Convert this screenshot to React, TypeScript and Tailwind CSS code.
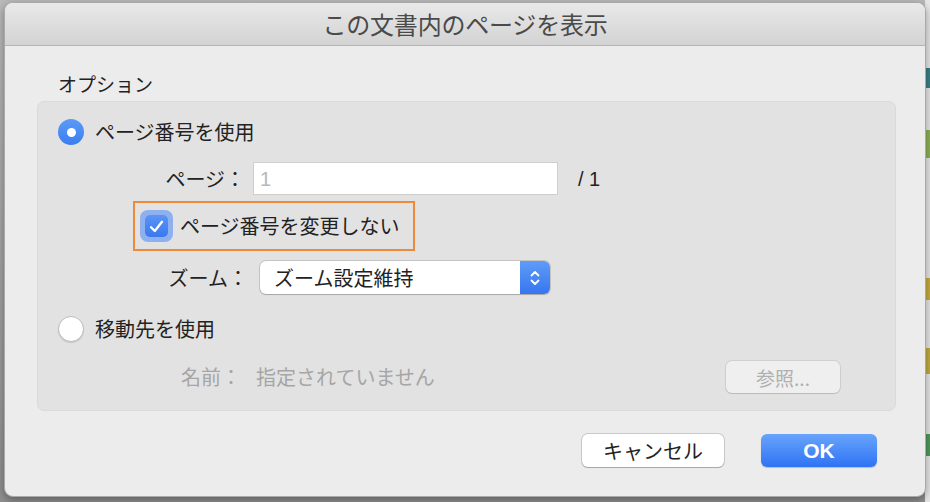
import React from "react";

// macOS style "show page" dialog
const jp = { fontFamily: '"Noto Sans CJK JP", "Noto Sans", sans-serif' };

function Radio({ on }: { on: boolean }) {
	if (on) {
		return (
			<div className="w-[26px] h-[26px] rounded-full bg-gradient-to-b from-[#5b9af7] to-[#3a7ff0] flex items-center justify-center shrink-0">
				<div className="w-[9px] h-[9px] rounded-full bg-white" />
			</div>
		);
	}
	return <div className="w-[26px] h-[26px] rounded-full bg-white border border-[#bdbdbd] shadow-[0_1px_1px_rgba(0,0,0,0.12)] shrink-0" />;
}

export default function App() {
	return (
		<div className="w-[930px] h-[502px] bg-gradient-to-b from-[#b9b9b9] to-[#8f8f8f] overflow-hidden relative" style={jp}>
			{/* bits of the window behind, peeking out on the right */}
			<div className="absolute right-0 top-0 w-[5px] h-full bg-[#e6e6e6]">
				<div className="mt-[68px] h-[20px] bg-[#3a7f86]" />
				<div className="mt-[42px] h-[28px] bg-[#8db055]" />
				<div className="mt-[120px] h-[22px] bg-[#c7aa3e]" />
				<div className="mt-[48px] h-[26px] bg-[#c1ab3f]" />
				<div className="mt-[60px] h-[22px] bg-[#4f9a5a]" />
			</div>

			<div className="ml-[4px] mt-[2px] w-[922px] h-[495px] bg-[#ececec] rounded-[9px] border border-[#a9a9a9] shadow-[0_3px_8px_rgba(0,0,0,0.35)] flex flex-col overflow-hidden relative">
				{/* title bar */}
				<div className="h-[43px] shrink-0 bg-gradient-to-b from-[#e9e9e9] to-[#d3d3d3] border-b border-[#b4b4b4] flex items-center justify-center">
					<span className="text-[24px] text-[#4a4a4a] leading-none tracking-[-0.2px]">この文書内のページを表示</span>
				</div>

				<div className="flex flex-col pl-[32px] pr-[29px]">
					<div className="mt-[26px] ml-[21px] text-[19px] leading-[24px] text-[#222]">オプション</div>

					{/* group box */}
					<div className="mt-[5px] h-[310px] bg-[#e2e2e2] border border-[#dadada] rounded-[7px] flex flex-col text-[20px] text-[#222]">
						<div className="mt-[17px] ml-[20px] flex items-center gap-[11px] h-[26px]">
							<Radio on />
							<span className="leading-none">ページ番号を使用</span>
						</div>

						<div className="mt-[17px] flex items-center h-[33px]">
							<div className="w-[207px] text-right leading-none text-[#222]">ページ：</div>
							<div className="ml-[8px] w-[305px] h-[33px] bg-white border border-[#cfcfcf] flex items-center pl-[6px] text-[#b8b8b8] leading-none" style={{ fontFamily: '"Liberation Sans", sans-serif' }}>
								1
							</div>
							<div className="ml-[20px] leading-none" style={{ fontFamily: '"Liberation Sans", sans-serif' }}>/ 1</div>
						</div>

						<div className="mt-[6px] ml-[95px] w-[282px] h-[50px] border-2 border-[#ef8a3a] flex items-center pl-[5px]">
							<div className="w-[33px] h-[32px] rounded-[8px] bg-[#8fb0ee] flex items-center justify-center shrink-0">
								<div className="w-[23px] h-[22px] rounded-[5px] bg-gradient-to-b from-[#5b95f6] to-[#3a78ee] flex items-center justify-center">
									<svg width="15" height="13" viewBox="0 0 15 13" fill="none">
										<path d="M2 7.2 L5.8 11 L13 1.8" stroke="white" strokeWidth="2.3" strokeLinecap="round" strokeLinejoin="round" />
									</svg>
								</div>
							</div>
							<span className="ml-[7px] leading-none">ページ番号を変更しない</span>
						</div>

						<div className="mt-[10px] flex items-center h-[33px]">
							<div className="w-[210px] text-right leading-none">ズーム：</div>
							<div className="ml-[12px] w-[290px] h-[33px] bg-white rounded-[6px] shadow-[0_0_0_1px_rgba(0,0,0,0.13),0_1px_1px_rgba(0,0,0,0.15)] flex items-stretch overflow-hidden">
								<div className="flex-1 flex items-center pl-[14px] leading-none">ズーム設定維持</div>
								<div className="w-[30px] bg-gradient-to-b from-[#5f9bf7] to-[#3676ef] flex items-center justify-center">
									<svg width="12" height="20" viewBox="0 0 12 20" fill="none">
										<path d="M2.5 7.5 L6 4 L9.5 7.5" stroke="white" strokeWidth="1.8" strokeLinecap="round" strokeLinejoin="round" />
										<path d="M2.5 12.5 L6 16 L9.5 12.5" stroke="white" strokeWidth="1.8" strokeLinecap="round" strokeLinejoin="round" />
									</svg>
								</div>
							</div>
						</div>

						<div className="mt-[22px] ml-[20px] flex items-center gap-[11px] h-[26px]">
							<Radio on={false} />
							<span className="leading-none">移動先を使用</span>
						</div>

						<div className="mt-[19px] flex items-center h-[32px] text-[#a6a6a6]">
							<div className="ml-[143px] leading-none">名前：</div>
							<div className="ml-[15px] leading-none">指定されていません</div>
							<div className="ml-auto mr-[55px] w-[114px] h-[32px] rounded-[6px] bg-[#efefef] shadow-[0_0_0_1px_rgba(0,0,0,0.08),0_1px_1px_rgba(0,0,0,0.1)] flex items-center justify-center text-[19px] text-[#b0b0b0] leading-none">
								参照...
							</div>
						</div>
					</div>

					{/* buttons */}
					<div className="mt-[23px] flex justify-end gap-[37px] pr-[19px]">
						<div className="w-[142px] h-[33px] rounded-[6px] bg-white shadow-[0_0_0_1px_rgba(0,0,0,0.14),0_1px_1px_rgba(0,0,0,0.18)] flex items-center justify-center text-[20px] text-[#222] leading-none">
							キャンセル
						</div>
						<div className="w-[116px] h-[33px] rounded-[6px] bg-gradient-to-b from-[#68a4fb] to-[#2f72f4] shadow-[0_1px_1px_rgba(0,0,0,0.2)] flex items-center justify-center text-[21px] text-white font-bold leading-none" style={{ fontFamily: '"Liberation Sans", sans-serif' }}>
							OK
						</div>
					</div>
				</div>
			</div>
		</div>
	);
}
